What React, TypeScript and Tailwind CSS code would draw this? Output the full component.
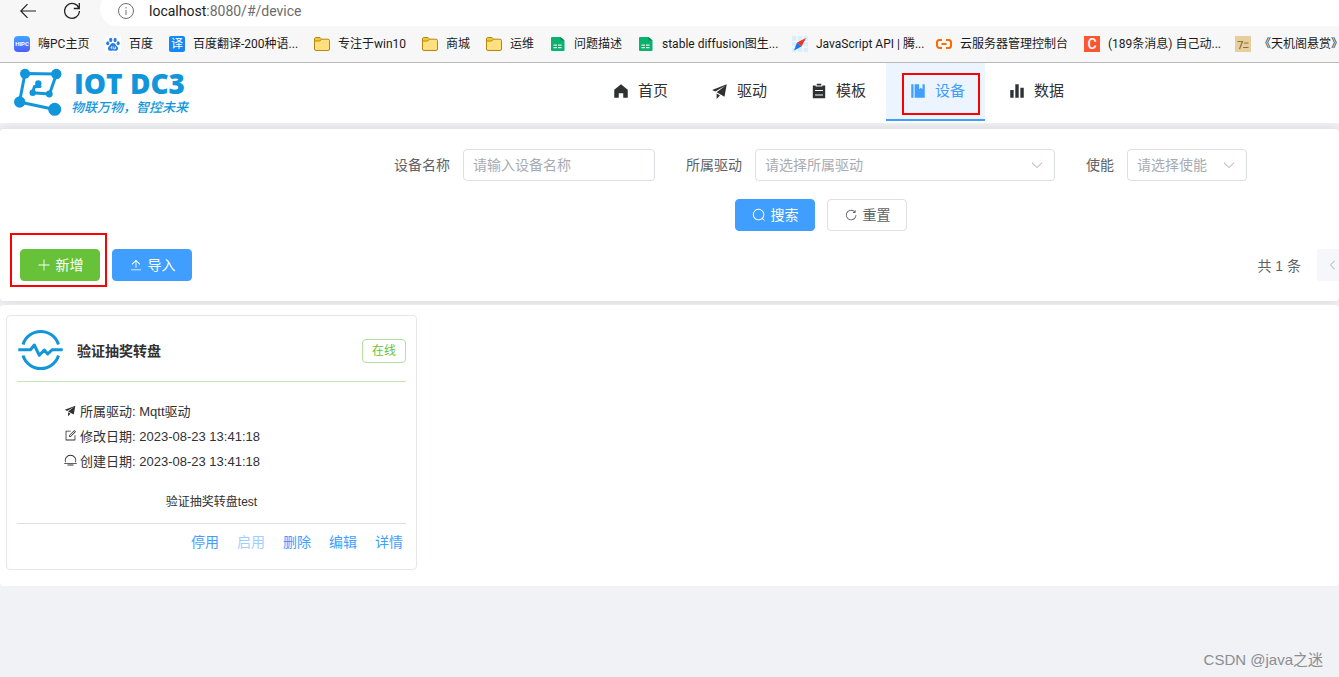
import type { ReactNode } from 'react';

const ICONS = {
  home: 'M512 128 128 447.936V896h255.936V640H640v256h255.936V447.936z',
  promotion: 'm64 448 832-320-128 704-446.08-243.328L832 192 242.816 545.472 64 448zm256 512V657.024L512 768 320 960z',
  list: 'M704 192h160v736H160V192h160v64h384v-64zM288 512h448v-64H288v64zm0 256h448v-64H288v64zm96-576V96h256v96H384z',
  management: 'M576 128v288l96-96 96 96V128h128v768H320V128h256zm-448 0h128v768H128V128z',
  histogram: 'M416 896V128h192v768H416zm-288 0V448h192v448H128zm576 0V320h192v576H704z',
  plus: 'M480 480V128a32 32 0 0 1 64 0v352h352a32 32 0 1 1 0 64H544v352a32 32 0 1 1-64 0V544H128a32 32 0 0 1 0-64h352z',
  upload: 'M160 832h704a32 32 0 1 1 0 64H160a32 32 0 1 1 0-64zm384-578.304V704h-64V247.296L237.248 490.048 192 444.8 508.8 128l316.8 316.8-45.312 45.248L544 253.696z',
  search: 'm795.904 750.72 124.992 124.928a32 32 0 0 1-45.248 45.248L750.656 795.904a416 416 0 1 1 45.248-45.248zM480 832a352 352 0 1 0 0-704 352 352 0 0 0 0 704z',
  refresh: 'M784.512 230.272v-50.56a32 32 0 1 1 64 0v149.056a32 32 0 0 1-32 32H667.52a32 32 0 1 1 0-64h92.992A320 320 0 1 0 524.8 833.152a320 320 0 0 0 320-320h64a384 384 0 0 1-384 384 384 384 0 0 1-384-384 384 384 0 0 1 643.712-282.88z',
  down: 'M831.872 340.864 512 652.672 192.128 340.864a30.592 30.592 0 0 0-42.752 0 29.12 29.12 0 0 0 0 41.6L489.664 714.24a32 32 0 0 0 44.672 0l340.288-331.712a29.12 29.12 0 0 0 0-41.728 30.592 30.592 0 0 0-42.752 0z',
  left: 'M609.408 149.376 277.76 489.6a32 32 0 0 0 0 44.672l331.648 340.352a29.12 29.12 0 0 0 41.728 0 30.592 30.592 0 0 0 0-42.752L339.264 511.936l311.872-319.872a30.592 30.592 0 0 0 0-42.688 29.12 29.12 0 0 0-41.728 0z',
  edit: 'M832 512a32 32 0 1 1 64 0v352a32 32 0 0 1-32 32H160a32 32 0 0 1-32-32V160a32 32 0 0 1 32-32h352a32 32 0 0 1 0 64H192v640h640V512zM469.952 554.24l52.8-7.552L847.104 222.4a32 32 0 1 0-45.248-45.248L477.44 501.44l-7.552 52.8zm422.4-422.4a96 96 0 0 1 0 135.808l-331.84 331.84a32 32 0 0 1-18.112 9.088L436.8 623.68a32 32 0 0 1-36.224-36.224l15.104-105.6a32 32 0 0 1 9.024-18.112l331.904-331.84a96 96 0 0 1 135.744 0z',
  sunset: 'M82.56 640a448 448 0 1 1 858.88 0h-67.2a384 384 0 1 0-724.288 0H82.56zM32 704h960q32 0 32 32t-32 32H32q-32 0-32-32t32-32zm256 128h448q32 0 32 32t-32 32H288q-32 0-32-32t32-32z',
};

type IconName = keyof typeof ICONS;

function Icon({ name, className }: { name: IconName; className: string }) {
  return (
    <svg viewBox="0 0 1024 1024" fill="currentColor" aria-hidden="true" className={`shrink-0 ${className}`}>
      <path d={ICONS[name]} />
    </svg>
  );
}

const folder = (
  <svg viewBox="0 0 16 16" className="size-4">
    <path d="M.5 3A1.5 1.5 0 0 1 2 1.500h4l1.500 1.700h6.500A1.500 1.500 0 0 1 15.500 4.700v8.300a1.500 1.500 0 0 1-1.500 1.500H2A1.500 1.500 0 0 1 .5 13z" fill="#ffe07f" stroke="#b8860b" />
    <path d="M1 4.800V3a1 1 0 0 1 1-1h3.800l1.300 1.400-1.400 1.400z" fill="#f5c431" />
    <path d="M1 5h4.700l1.800-1.800" fill="none" stroke="#b8860b" />
  </svg>
);

const sheet = (
  <svg viewBox="0 0 16 16" className="size-4">
    <path d="M2 1h8.500L14.500 4.500V14a1 1 0 0 1-1 1H2a1 1 0 0 1-1-1V2a1 1 0 0 1 1-1z" fill="#0ab26f" />
    <path d="M10.500 1 14.500 4.500h-4z" fill="#048a55" />
    <path d="M3.500 8.500h3.500v1.300H3.500zM8 8.500h3.500v1.300H8zM3.500 11h3.500v1.300H3.500zM8 11h3.500v1.300H8z" fill="#d8f5e8" />
  </svg>
);

const bookmarks: { label: string; width: string; icon: ReactNode }[] = [
  {
    label: '嗨PC主页',
    width: 'w-[51px]',
    icon: (
      <span className="flex size-4 items-center justify-center rounded-[4px] bg-gradient-to-b from-[#41a5ff] to-[#4a5cff] text-[6px] font-bold text-white">
        HiPC
      </span>
    ),
  },
  {
    label: '百度',
    width: 'w-[24px]',
    icon: (
      <svg viewBox="0 0 16 16" className="size-4">
        <rect width="16" height="16" fill="#fff" />
        <g fill="#2a7de8">
          <ellipse cx="5.700" cy="3.900" rx="1.600" ry="2.200" />
          <ellipse cx="10.100" cy="3.900" rx="1.600" ry="2.200" />
          <ellipse cx="2.700" cy="7.300" rx="1.500" ry="2" />
          <ellipse cx="13.200" cy="7.300" rx="1.500" ry="2" />
          <path d="M8 7c2 0 2.600 1.900 4 3.200 2 1.900 1 4.600-1.300 4.500-1 0-1.700-.3-2.700-.3s-1.700.3-2.700.3C3 14.800 2 12.100 4 10.200 5.400 8.900 6 7 8 7z" />
        </g>
        <path d="M6.800 10v3M5.500 11.700h1.300M8.700 10.500v2.300h1.800v-2.300" fill="none" stroke="#fff" strokeWidth=".8" />
      </svg>
    ),
  },
  {
    label: '百度翻译-200种语...',
    width: 'w-[105px]',
    icon: <span className="flex size-4 items-center justify-center rounded-[2px] bg-[#1687f5] text-xs text-white">译</span>,
  },
  { label: '专注于win10', width: 'w-[68px]', icon: folder },
  { label: '商城', width: 'w-[24px]', icon: folder },
  { label: '运维', width: 'w-[24px]', icon: folder },
  { label: '问题描述', width: 'w-[48px]', icon: sheet },
  { label: 'stable diffusion图生...', width: 'w-[114px]', icon: sheet },
  {
    label: 'JavaScript API | 腾...',
    width: 'w-[104px]',
    icon: (
      <svg viewBox="0 0 16 16" className="size-4">
        <rect width="16" height="16" fill="#d9edfb" />
        <path d="M0 5.500h16M0 11h16M5 0v16M11 0v16" stroke="#fff" />
        <path d="M14 2 5 6.500 9.500 10.500z" fill="#f5341e" />
        <path d="M5 6.500 2 14.500l7.500-4z" fill="#1478f0" />
      </svg>
    ),
  },
  {
    label: '云服务器管理控制台',
    width: 'w-[108px]',
    icon: (
      <svg viewBox="0 0 16 16" className="size-4">
        <path d="M6 4H3.500A2.500 2.500 0 0 0 1 6.500v3A2.500 2.500 0 0 0 3.500 12H6M10 4h2.500A2.500 2.500 0 0 1 15 6.500v3a2.500 2.500 0 0 1-2.500 2.500H10M5.500 8h5" fill="none" stroke="#ff6a00" strokeWidth="2" />
      </svg>
    ),
  },
  {
    label: '(189条消息) 自己动...',
    width: 'w-[111px]',
    icon: <span className="flex size-4 items-center justify-center bg-[#fc5531] text-sm font-medium text-white">C</span>,
  },
  {
    label: '《天机阁悬赏》',
    width: 'w-[84px]',
    icon: (
      <svg viewBox="0 0 16 16" className="size-4">
        <rect width="16" height="16" fill="#e6cf9c" />
        <path d="M2.500 5.500h5L4.500 13M9 7h4.500M8 11.500h5.500" fill="none" stroke="#8c7140" strokeWidth="1.200" />
      </svg>
    ),
  },
];

function BrowserChrome() {
  return (
    <div className="border-b border-[#b9b9b9] bg-[#f7f7f7] font-[Roboto,'Noto_Sans_CJK_SC',sans-serif] text-[#1a1a1a]">
      <div className="flex h-[26px] items-start overflow-hidden">
        <button type="button" aria-label="Back" className="ml-5 mt-[3px]">
          <svg viewBox="0 0 16 16" className="size-4" fill="none" stroke="#222" strokeWidth="1.200">
            <path d="M16 8H.8M7.500 1.200.8 8l6.700 6.800" />
          </svg>
        </button>
        <button type="button" aria-label="Refresh" className="ml-7 mt-[2px]">
          <svg viewBox="0 0 16 18" className="h-[18px] w-4" fill="none" stroke="#222" strokeWidth="1.300">
            <path d="M15 6.500A7.400 7.400 0 1 0 15.400 9M15.300 1v5.500H9.800" />
          </svg>
        </button>
        <div className="-mt-2 ml-5 flex h-[34px] flex-1 items-center rounded-l-full bg-white pl-[18px] pt-1">
          <svg viewBox="0 0 16 16" className="mr-[15px] size-4" fill="none" stroke="#6f6f6f">
            <circle cx="8" cy="8" r="7.500" />
            <path d="M8 7v5M8 4v1.500" />
          </svg>
          <span className="text-sm leading-5 text-[#6c6c6c]">
            <span className="text-[#1a1a1a]">localhost</span>:8080/#/device
          </span>
        </div>
      </div>
      <nav className="flex h-9 items-center overflow-hidden pl-3.5">
        {bookmarks.map((b) => (
          <a key={b.label} href="#" className="mr-4 flex shrink-0 items-center gap-2 text-xs">
            {b.icon}
            <span className={`whitespace-nowrap ${b.width}`}>{b.label}</span>
          </a>
        ))}
      </nav>
    </div>
  );
}

function Logo() {
  return (
    <a href="#" className="flex items-center gap-[9px] text-[#1296db]">
      <svg viewBox="0 0 50 50" className="h-[50px] w-[50px]" fill="none" stroke="currentColor">
        <path d="M42.700 41.500 7.500 34 13 5.500l31.500.5-7 20-17-1.300 2-6.200h5.500l-1.500-3.500" strokeWidth="3" strokeLinejoin="round" />
        <g fill="currentColor" stroke="none">
          <circle cx="13" cy="5.800" r="5" />
          <circle cx="44.300" cy="6" r="5.200" />
          <circle cx="7.700" cy="34" r="5.700" />
          <circle cx="42.700" cy="41.300" r="6.500" />
          <circle cx="26.300" cy="15.500" r="3.200" />
          <circle cx="20.700" cy="24.700" r="3.200" />
          <circle cx="37.300" cy="26" r="3.400" />
        </g>
      </svg>
      <span className="flex flex-col">
        <span className="pl-[3px] font-['Open_Sans',sans-serif] text-[28px] font-extrabold leading-7">IOT DC3</span>
        <span className="font-['Noto_Sans_CJK_SC',serif] text-[13px] font-medium italic leading-5">物联万物，智控未来</span>
      </span>
    </a>
  );
}

const menu: { label: string; icon: IconName }[] = [
  { label: '首页', icon: 'home' },
  { label: '驱动', icon: 'promotion' },
  { label: '模板', icon: 'list' },
  { label: '设备', icon: 'management' },
  { label: '数据', icon: 'histogram' },
];

function Header() {
  return (
    <header className="relative flex h-[60px] justify-between bg-white pl-3 pr-[255px]">
      <Logo />
      <nav className="flex h-[58px]">
        {menu.map((m) => {
          const active = m.label === '设备';
          return (
            <a
              key={m.label}
              href="#"
              className={`relative flex items-center gap-[5px] border-b-2 px-5 text-[15px] ${
                active ? 'border-[#409eff] bg-[#ecf5ff] text-[#409eff]' : 'border-transparent text-[#303133]'
              }`}
            >
              <span className="flex w-6 justify-center">
                <Icon name={m.icon} className="size-[18px]" />
              </span>
              {m.label}
              {active && <span className="absolute left-4 top-2.5 h-[42px] w-[78px] border-2 border-[#f00]" />}
            </a>
          );
        })}
      </nav>
    </header>
  );
}

function SelectBox({ id, placeholder, width }: { id: string; placeholder: string; width: string }) {
  return (
    <span className={`relative flex ${width}`}>
      <select id={id} className="h-8 w-full appearance-none rounded-[4px] border border-[#dcdfe6] bg-white px-[9px] text-sm text-[#a8abb2]">
        <option>{placeholder}</option>
      </select>
      <Icon name="down" className="pointer-events-none absolute right-[11px] top-[9px] size-3.5 text-[#a8abb2]" />
    </span>
  );
}

const buttonBase = 'flex h-8 w-20 items-center justify-center gap-[5px] rounded-[4px] border text-sm';

function FilterPanel() {
  return (
    <section className="overflow-hidden rounded-[4px] bg-white px-5 pb-5 pt-5 shadow-[0_0_12px_rgba(0,0,0,0.12)]">
      <form className="text-sm text-[#606266]">
        <div className="flex justify-end pr-[72px]">
          <label htmlFor="name" className="pr-[13px] leading-8">设备名称</label>
          <input id="name" placeholder="请输入设备名称" className="mr-[31px] h-8 w-48 rounded-[4px] border border-[#dcdfe6] px-[9px] placeholder:text-[#a8abb2]" />
          <label htmlFor="driver" className="pr-[13px] leading-8">所属驱动</label>
          <SelectBox id="driver" placeholder="请选择所属驱动" width="w-[300px] mr-[31px]" />
          <label htmlFor="enable" className="pr-[13px] leading-8">使能</label>
          <SelectBox id="enable" placeholder="请选择使能" width="w-[120px]" />
        </div>
        <div className="mt-[18px] flex justify-center gap-3 pl-[303px]">
          <button type="button" className={`${buttonBase} border-[#409eff] bg-[#409eff] text-white`}>
            <Icon name="search" className="size-3.5" />
            搜索
          </button>
          <button type="button" className={`${buttonBase} border-[#dcdfe6] bg-white`}>
            <Icon name="refresh" className="size-3.5" />
            重置
          </button>
        </div>
      </form>
      <div className="mt-[18px] flex items-center justify-between">
        <div className="flex gap-3">
          <span className="relative">
            <button type="button" className={`${buttonBase} border-[#67c23a] bg-[#67c23a] text-white`}>
              <Icon name="plus" className="size-3.5" />
              新增
            </button>
            <span className="pointer-events-none absolute -left-2.5 -top-4 h-[54px] w-[97px] border-2 border-[#f00]" />
          </span>
          <button type="button" className={`${buttonBase} border-[#409eff] bg-[#409eff] text-white`}>
            <Icon name="upload" className="size-3.5" />
            导入
          </button>
        </div>
        <div className="-mr-[30px] flex items-center gap-4 text-sm text-[#606266]">
          <span className="pt-0.5">共 1 条</span>
          <button type="button" disabled aria-label="上一页" className="flex size-8 items-center justify-center rounded-[2px] bg-[#f5f7fa] text-[#a8abb2]">
            <Icon name="left" className="size-3" />
          </button>
        </div>
      </div>
    </section>
  );
}

const details: { icon: IconName; label: string; value: string }[] = [
  { icon: 'promotion', label: '所属驱动', value: 'Mqtt驱动' },
  { icon: 'edit', label: '修改日期', value: '2023-08-23 13:41:18' },
  { icon: 'sunset', label: '创建日期', value: '2023-08-23 13:41:18' },
];

const actions = ['停用', '启用', '删除', '编辑', '详情'];

function DeviceCard() {
  return (
    <article className="w-[411px] rounded-[4px] border border-[#e4e7ed] bg-white px-2.5 text-[#303133]">
      <header className="flex h-[66px] items-center border-b border-[#c2e7b0] pt-1">
        <svg viewBox="0 2 46 44" className="h-[44px] w-[46px]" fill="none" stroke="#1296db" strokeWidth="3">
          <path d="M6 17.500a18.600 18.600 0 0 1 35.500 0M6 28.500a18.600 18.600 0 0 0 35.500 0" />
          <path d="M1.300 22.700h12.200l3.800-4.700 5 10.300 5-5.300 3.400 4 4.600-4.300h10.400" strokeLinejoin="round" />
        </svg>
        <h2 className="ml-3.5 flex-1 text-sm font-bold">验证抽奖转盘</h2>
        <span className="h-6 rounded-[4px] border border-[#b3e19d] px-[9px] text-xs leading-[22px] text-[#67c23a]">在线</span>
      </header>
      <ul className="ml-[47px] mt-[17px] text-[13px] leading-[25px]">
        {details.map((d) => (
          <li key={d.label} className="flex items-center gap-[3px]">
            <Icon name={d.icon} className="mb-[3px] size-[13px]" />
            {d.label}: {d.value}
          </li>
        ))}
      </ul>
      <p className="mt-[18px] text-center text-xs leading-5">验证抽奖转盘test</p>
      <footer className="mt-[11px] flex justify-end gap-[18px] border-t border-[#dcdfe6] pb-[17px] pr-[3px] pt-2 text-sm leading-5 text-[#409eff]">
        {actions.map((a) => (
          <button key={a} type="button" disabled={a === '启用'} className="disabled:text-[#a0cfff]">
            {a}
          </button>
        ))}
      </footer>
    </article>
  );
}

export default function App() {
  return (
    <div className="relative min-h-screen overflow-hidden bg-[#f0f2f5] font-['Liberation_Sans','Noto_Sans_CJK_SC',sans-serif]">
      <BrowserChrome />
      <Header />
      <main className="mt-1.5 flex flex-col gap-1">
        <FilterPanel />
        <section className="rounded-[4px] bg-white px-1.5 pb-4 pt-2.5">
          <DeviceCard />
        </section>
      </main>
      <span className="absolute bottom-1.5 right-4 text-[15px] text-[#8b8d92]">CSDN @java之迷</span>
    </div>
  );
}
